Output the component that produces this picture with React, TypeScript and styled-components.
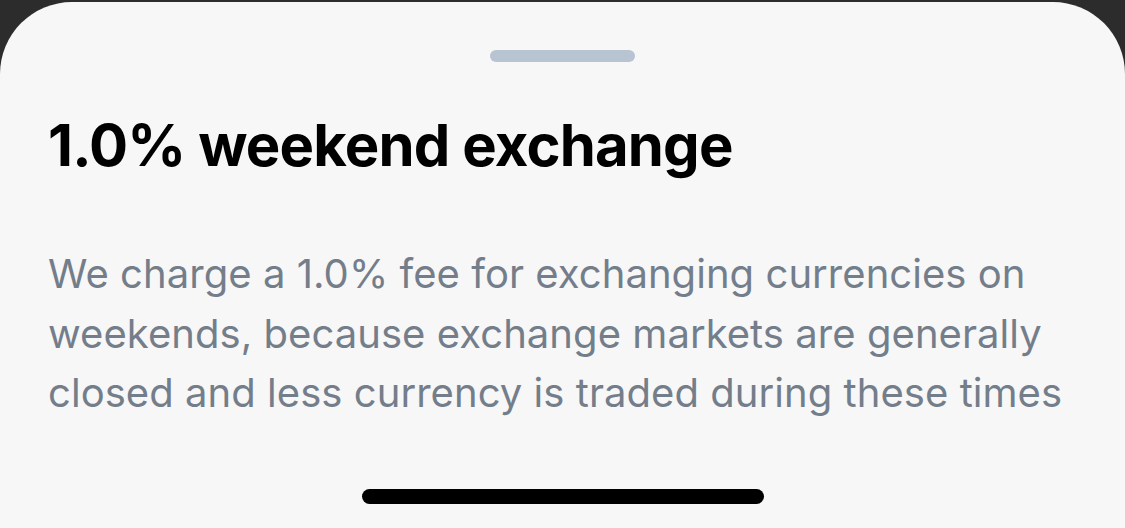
import React from 'react';
import styled, { createGlobalStyle } from 'styled-components';

const GlobalStyle = createGlobalStyle`
  html, body {
    margin: 0;
    padding: 0;
    background: #2c2c2c;
  }
  #root {
    height: 528px;
  }
`;

const Backdrop = styled.div`
  height: 528px;
  padding-top: 2px;
  box-sizing: border-box;
  background: #2c2c2c;
  overflow: hidden;
`;

const Sheet = styled.div`
  height: 100%;
  background: #f7f7f7;
  border-radius: 72px 72px 0 0;
  display: flex;
  flex-direction: column;
  align-items: stretch;
  font-family: Inter, 'Noto Sans', sans-serif;
`;

const Grabber = styled.div`
  align-self: center;
  width: 145px;
  height: 12px;
  margin-top: 48px;
  border-radius: 6px;
  background: #b9c4d2;
`;

const Content = styled.div`
  flex: 1;
  padding: 0 40px 0 48px;
`;

const Title = styled.h1`
  margin: 48px 0 0;
  font-size: 58px;
  line-height: 70px;
  font-weight: 700;
  letter-spacing: -0.85px;
  color: #000;
`;

const Body = styled.p`
  margin: 64px 0 0;
  font-size: 40px;
  line-height: 59.5px;
  font-weight: 400;
  letter-spacing: 0.05px;
  color: #747e8b;
`;

const HomeBar = styled.div`
  align-self: center;
  width: 402px;
  height: 15px;
  margin-bottom: 24px;
  border-radius: 8px;
  background: #000;
`;

export default function App() {
  return (
    <>
      <GlobalStyle />
      <Backdrop>
        <Sheet>
          <Grabber />
          <Content>
            <Title>1.0% weekend exchange</Title>
            <Body>
              We charge a 1.0% fee for exchanging currencies on weekends, because exchange
              markets are generally closed and less currency is traded during these times
            </Body>
          </Content>
          <HomeBar />
        </Sheet>
      </Backdrop>
    </>
  );
}
